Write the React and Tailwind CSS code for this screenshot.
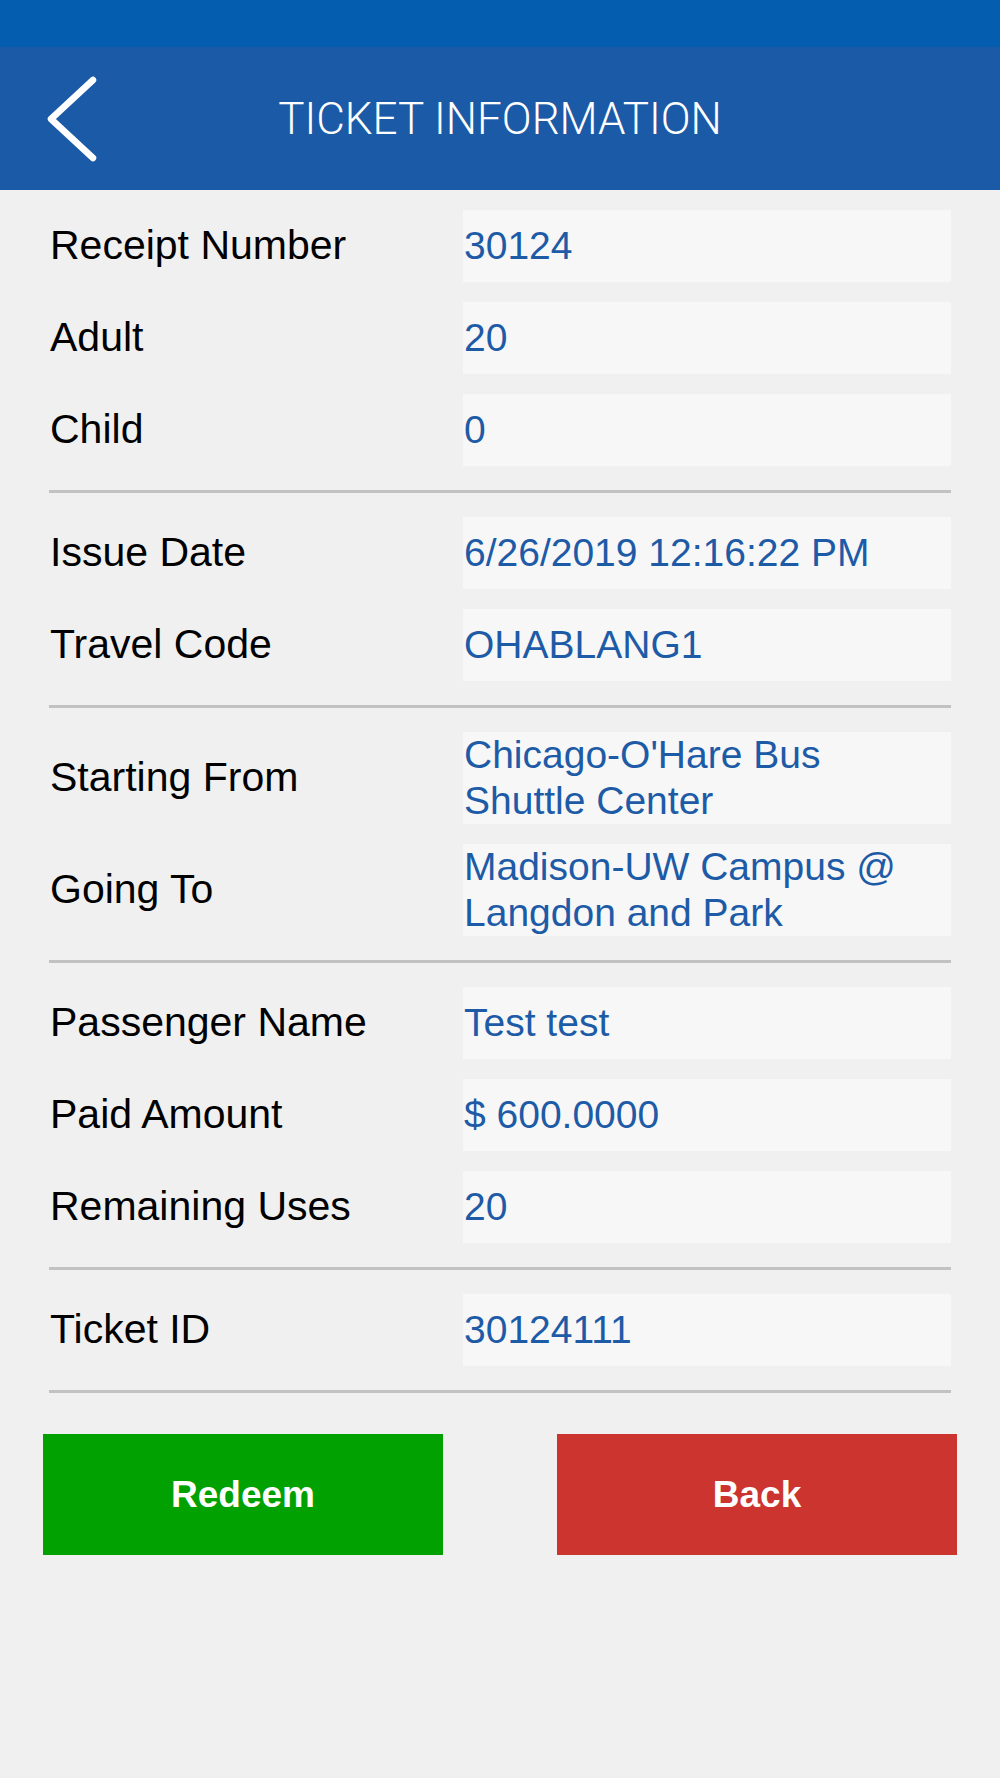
import React from "react";

const groups = [
  [
    { label: "Receipt Number", value: "30124" },
    { label: "Adult", value: "20" },
    { label: "Child", value: "0" },
  ],
  [
    { label: "Issue Date", value: "6/26/2019 12:16:22 PM" },
    { label: "Travel Code", value: "OHABLANG1" },
  ],
  [
    { label: "Starting From", value: ["Chicago-O'Hare Bus", "Shuttle Center"] },
    { label: "Going To", value: ["Madison-UW Campus @", "Langdon and Park"] },
  ],
  [
    { label: "Passenger Name", value: "Test test" },
    { label: "Paid Amount", value: "$ 600.0000" },
    { label: "Remaining Uses", value: "20" },
  ],
  [{ label: "Ticket ID", value: "30124111" }],
];

const Row = ({ label, value }) => {
  const multi = Array.isArray(value);
  return (
    <div className="grid grid-cols-[414px_1fr] items-center">
      <div className="pl-px text-[41px] text-black">{label}</div>
      {multi ? (
        <div className="h-[92px] bg-[#F7F7F7] pl-px text-[39px] leading-[46px] text-[#1E5BA7]">
          {value.map((line) => (
            <div key={line}>{line}</div>
          ))}
        </div>
      ) : (
        <div className="flex h-[72px] items-center bg-[#F7F7F7] pl-px text-[39px] text-[#1E5BA7]">
          {value}
        </div>
      )}
    </div>
  );
};

const App = () => {
  return (
    <div
      className="min-h-[1778px] w-full bg-[#F0F0F0]"
      style={{ fontFamily: '"Liberation Sans", Arial, sans-serif' }}
    >
      {/* status bar */}
      <div className="h-[47px] bg-[#045DAE]" />

      {/* header */}
      <div className="grid h-[143px] grid-cols-[1fr_auto_1fr] items-center bg-[#1B5AA7]">
        <div className="pl-[44px]">
          <svg width="56" height="92" viewBox="0 0 56 92" fill="none">
            <path
              d="M49 7 L7 46 L49 85"
              stroke="white"
              strokeWidth="6.5"
              strokeLinecap="round"
              strokeLinejoin="round"
            />
          </svg>
        </div>
        <h1
          className="text-[44px] font-light text-white"
          style={{ fontFamily: "Roboto, sans-serif" }}
        >
          TICKET INFORMATION
        </h1>
        <div />
      </div>

      {/* ticket details */}
      <div className="px-[49px] pt-[20px]">
        {groups.map((group, i) => (
          <div key={i}>
            <div className="flex flex-col gap-[20px]">
              {group.map((row) => (
                <Row key={row.label} {...row} />
              ))}
            </div>
            <div className="my-[24px] h-[3px] bg-[#C2C2C2]" />
          </div>
        ))}
      </div>

      {/* actions */}
      <div className="mt-[41px] flex justify-between px-[43px]">
        <button className="flex h-[121px] w-[400px] items-center justify-center bg-[#01A101] text-[37px] font-bold text-white">
          Redeem
        </button>
        <button className="flex h-[121px] w-[400px] items-center justify-center bg-[#CC3430] text-[37px] font-bold text-white">
          Back
        </button>
      </div>
    </div>
  );
};

export default App;
